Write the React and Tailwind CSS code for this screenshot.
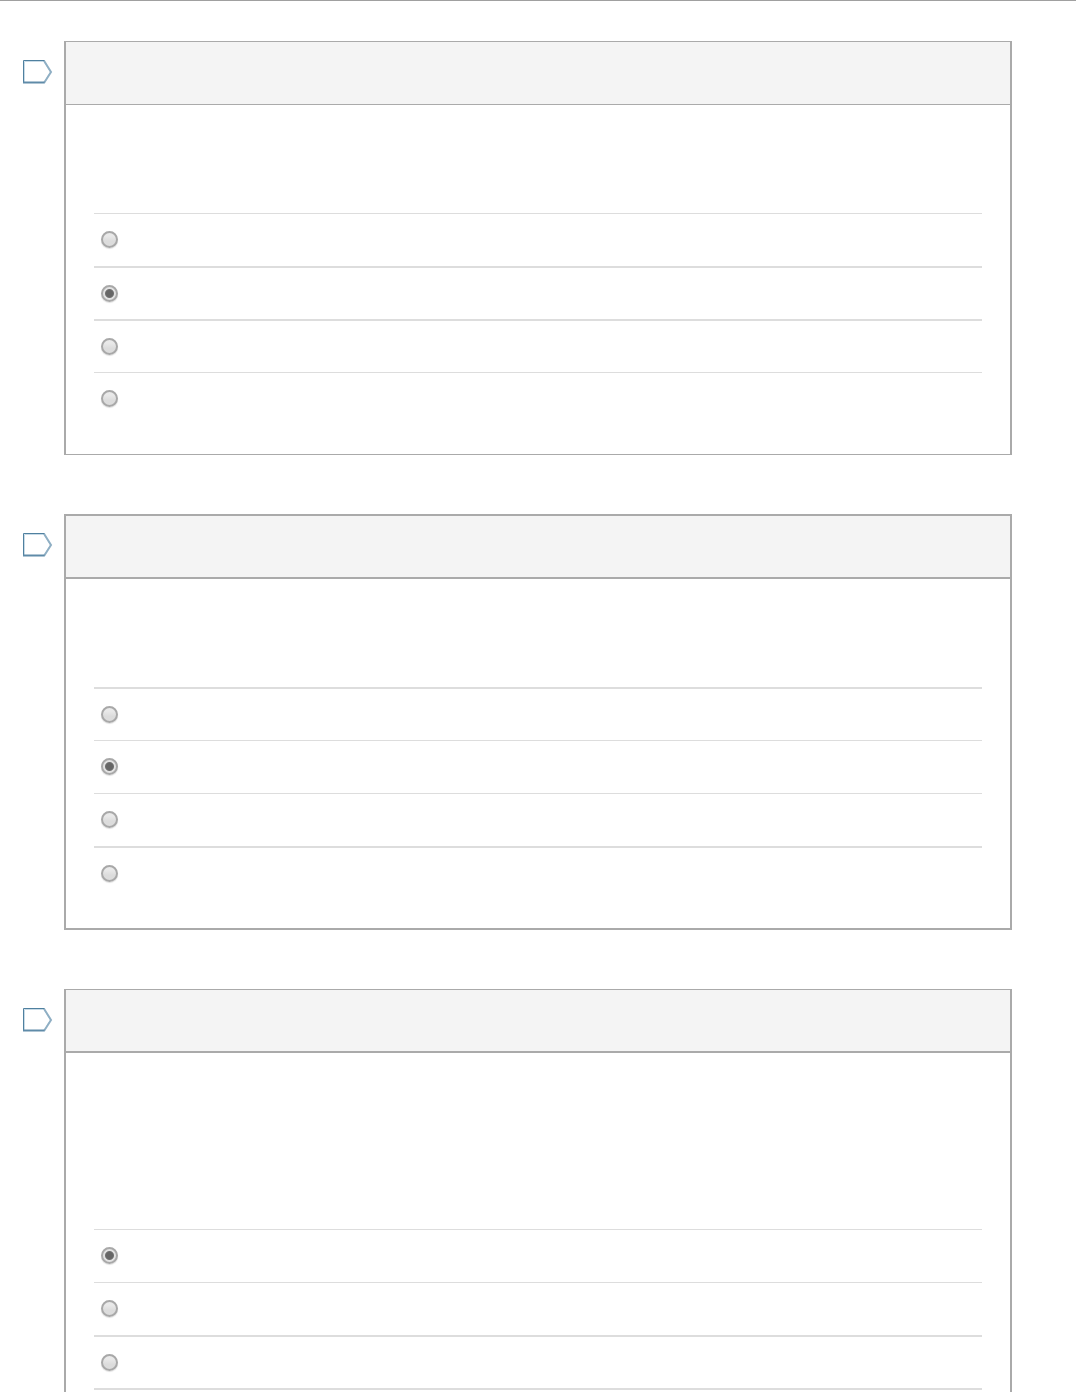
import React, { useState } from 'react';
import clsx from 'clsx';

const questions = [
  {
    id: 'question-1',
    selected: 1,
    card: 'border-y',
    header: 'border-b',
    prompt: 'h-[108px]',
    rows: ['border-t', 'border-t-2', 'border-t-2', 'border-t']
  },
  {
    id: 'question-2',
    selected: 1,
    card: 'border-y-2',
    header: 'border-b-2',
    prompt: 'h-[108px]',
    rows: ['border-t-2', 'border-t', 'border-t', 'border-t-2']
  },
  {
    id: 'question-3',
    selected: 0,
    card: 'border-y',
    header: 'border-b-2',
    prompt: 'h-44',
    rows: ['border-t', 'border-t', 'border-t-2', 'border-t-2']
  }
];

const FlagButton = ({ flagged, onClick }) => (
  <button
    type="button"
    onClick={onClick}
    aria-label="Flag question"
    aria-pressed={flagged}
    className="block cursor-pointer"
  >
    <svg width="30" height="24" viewBox="0 0 30 24" fill={flagged ? '#fcd34d' : 'none'}>
      <path d="M1.5 1.5H21L27.5 12L21 22.5H1.5Z" stroke="#c9dbe7" strokeWidth="1" />
      <path d="M21 0.7L28 12L21 23" stroke="#8fafc4" strokeWidth="2" />
      <path d="M21.5 0.5H0.5V23" stroke="#4f809f" strokeWidth="1" />
      <path d="M0 22.5H21.5" stroke="#5f8ba8" strokeWidth="2" />
    </svg>
  </button>
);

const Answer = ({ name, index, checked, onChange, className }) => (
  <li className={clsx('flex h-[53px] items-center border-[#dddddd] pb-px pl-[7px]', className)}>
    <input
      type="radio"
      name={name}
      checked={checked}
      onChange={onChange}
      aria-label={`Answer ${index + 1}`}
      className={clsx(
        'size-[17px] appearance-none rounded-full border-2 border-[#a8a8a8] bg-origin-border shadow-[0_1px_1px_#dedede]',
        checked
          ? 'bg-[radial-gradient(circle_at_center,#666666_3px,#707070_4px,#e2e2e2_5px)]'
          : 'bg-linear-to-b from-[#e9e9e9] from-30% to-[#dcdcdc] to-60%'
      )}
    />
  </li>
);

const Question = ({ question }) => {
  const [selected, setSelected] = useState(question.selected);
  const [flagged, setFlagged] = useState(false);

  return (
    <section className="flex pr-16">
      <div className="w-16 shrink-0 pl-[23px] pt-[19px]">
        <FlagButton flagged={flagged} onClick={() => setFlagged(!flagged)} />
      </div>

      <div className={clsx('flex-1 border-x-2 border-[#aaaaaa] bg-white', question.card)}>
        {/* Title bar */}
        <div className={clsx('h-[63px] border-[#aaaaaa] bg-[#f4f4f4]', question.header)} />

        {/* Question text and answers */}
        <div className="px-7 pb-[29px]">
          <div className={question.prompt} />
          <ul>
            {question.rows.map((row, index) => (
              <Answer
                key={index}
                name={question.id}
                index={index}
                checked={selected === index}
                onChange={() => setSelected(index)}
                className={row}
              />
            ))}
          </ul>
        </div>
      </div>
    </section>
  );
};

export default function App() {
  return (
    <main className="flex h-screen flex-col gap-[59px] overflow-hidden border-t border-[#a0a0a0] bg-white pt-10 font-['Liberation_Sans',sans-serif]">
      {questions.map((question) => (
        <Question key={question.id} question={question} />
      ))}
    </main>
  );
}
